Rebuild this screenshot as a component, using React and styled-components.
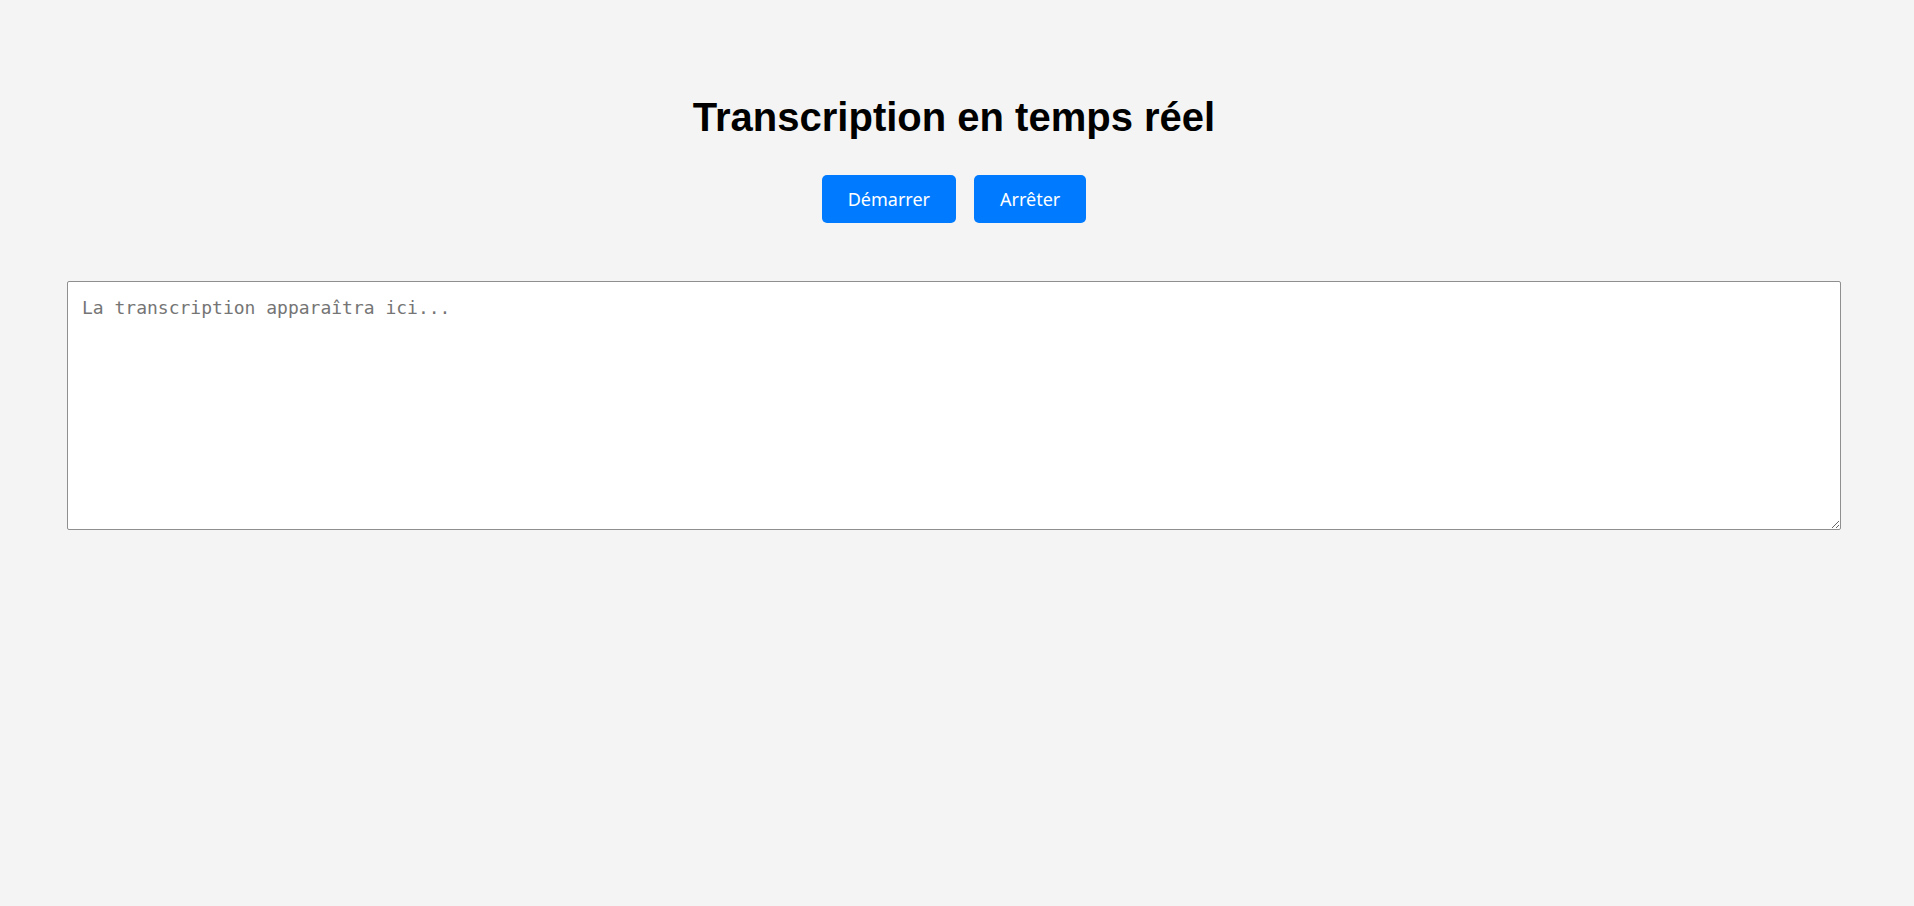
import React from "react";
import styled, { createGlobalStyle } from "styled-components";

const Global = createGlobalStyle`
  html, body { margin: 0; padding: 0; background: #f4f4f4; }
  body { font-family: "Liberation Sans", Arial, sans-serif; }
`;

const Page = styled.div`
  min-height: 906px;
  box-sizing: border-box;
  padding: 94px 73px 0 67px;
  display: flex;
  flex-direction: column;
  align-items: center;
`;

const Title = styled.h1`
  margin: 0;
  font-family: "Liberation Sans", Arial, sans-serif;
  font-weight: 700;
  font-size: 40px;
  line-height: 46px;
  color: #000;
`;

const Controls = styled.div`
  display: flex;
  gap: 18px;
  margin-top: 35px;
`;

const Button = styled.button`
  height: 48px;
  padding: 0 26px;
  border: none;
  border-radius: 5px;
  background: #007bff;
  color: #fff;
  font-family: "Noto Sans", "Open Sans", sans-serif;
  font-size: 18px;
  cursor: pointer;
`;

const Transcript = styled.textarea`
  margin-top: 58px;
  align-self: stretch;
  box-sizing: border-box;
  height: 249px;
  padding: 14px 14px;
  border: 1px solid #8f8f8f;
  border-radius: 2px;
  background: #fff;
  font-family: "DejaVu Sans Mono", "Liberation Mono", monospace;
  font-size: 18px;
  line-height: 24px;
  color: #222;
  resize: vertical;
  &::placeholder { color: #757575; }
`;

export default function App() {
  return (
    <>
      <Global />
      <Page>
        <Title>Transcription en temps réel</Title>
        <Controls>
          <Button>Démarrer</Button>
          <Button>Arrêter</Button>
        </Controls>
        <Transcript placeholder="La transcription apparaîtra ici..." />
      </Page>
    </>
  );
}
